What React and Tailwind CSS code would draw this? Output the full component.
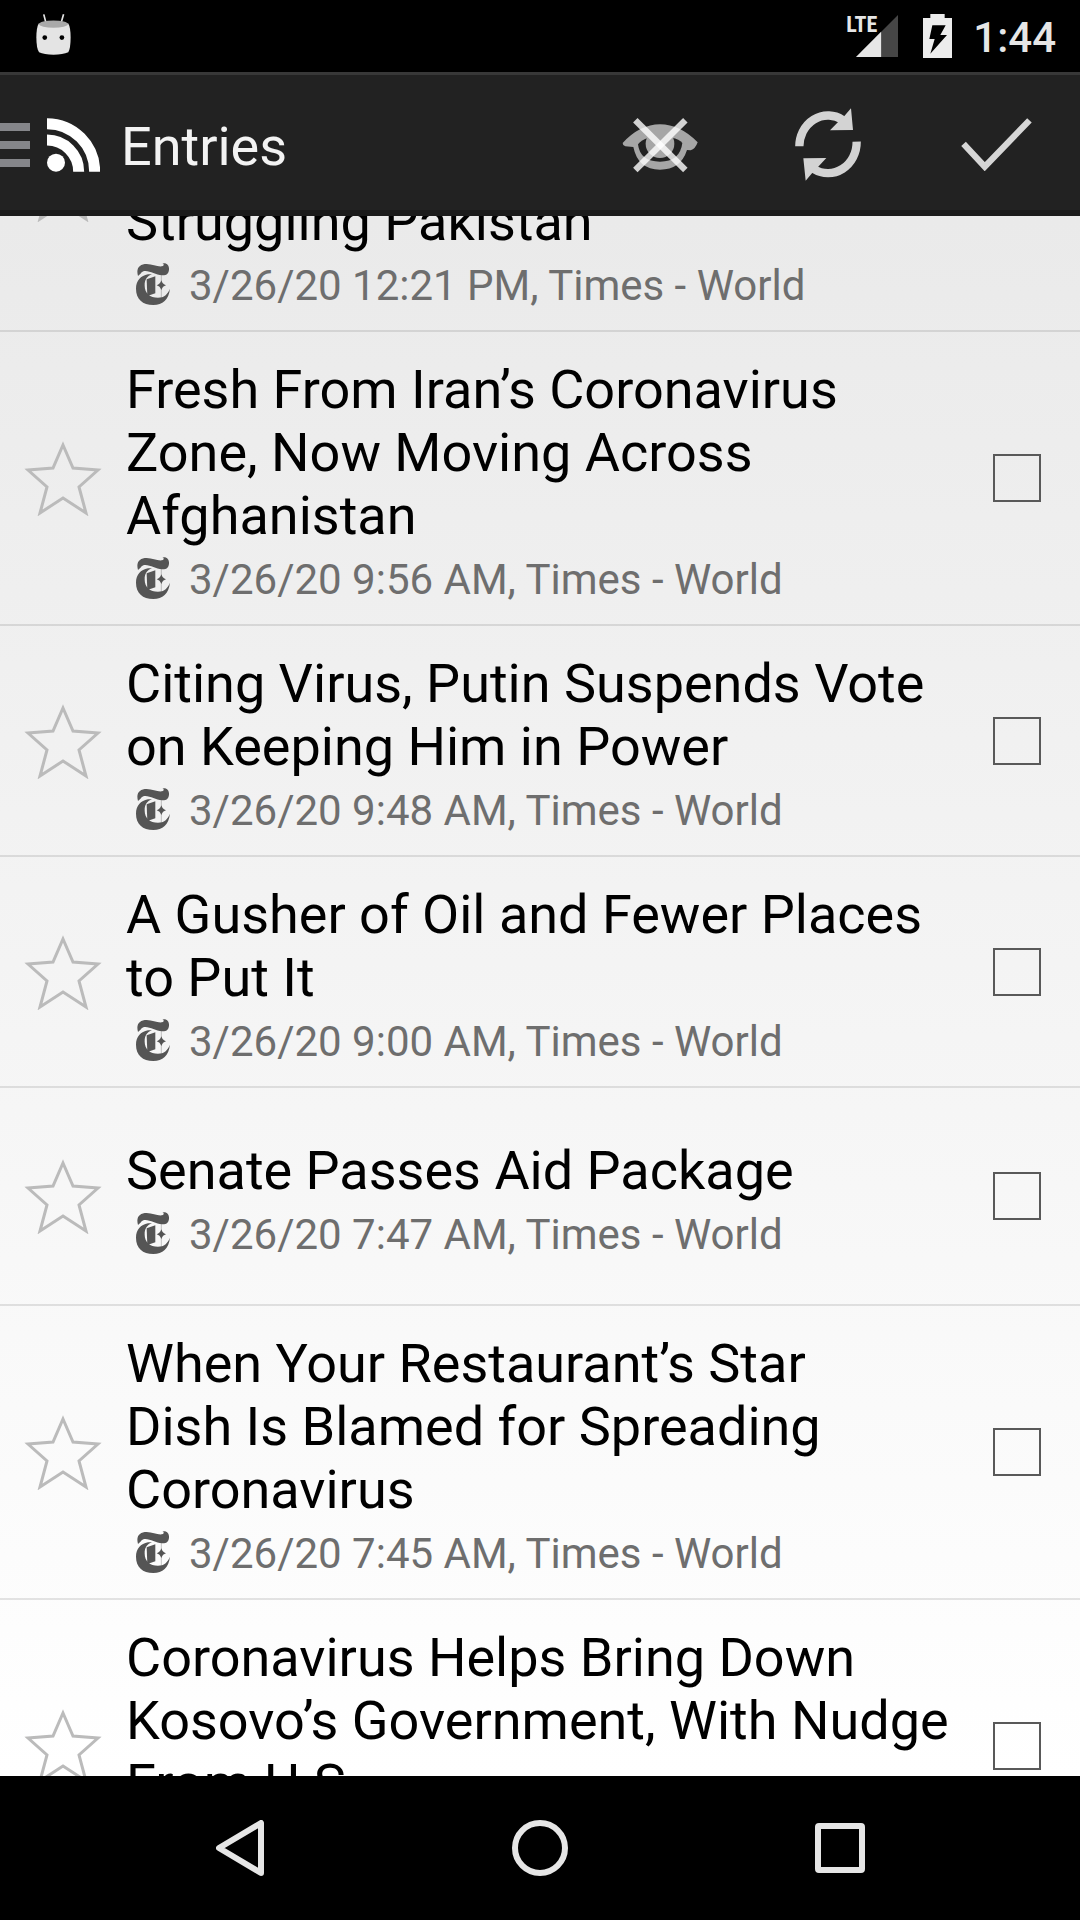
const entries = [
  {
    id: "pakistan",
    title: "Struggling Pakistan",
    date: "3/26/20 12:21 PM",
    rowClass: "min-h-[294px] items-stretch",
    textClass: "justify-end",
  },
  { id: "iran", title: "Fresh From Iran’s Coronavirus Zone, Now Moving Across Afghanistan", date: "3/26/20 9:56 AM" },
  { id: "putin", title: "Citing Virus, Putin Suspends Vote on Keeping Him in Power", date: "3/26/20 9:48 AM" },
  { id: "oil", title: "A Gusher of Oil and Fewer Places to Put It", date: "3/26/20 9:00 AM" },
  { id: "senate", title: "Senate Passes Aid Package", date: "3/26/20 7:47 AM" },
  { id: "restaurant", title: "When Your Restaurant’s Star\nDish Is Blamed for Spreading Coronavirus", date: "3/26/20 7:45 AM" },
  {
    id: "kosovo",
    title: "Coronavirus Helps Bring Down Kosovo’s Government, With Nudge From U.S.",
    rowClass: "min-h-[294px] items-stretch",
    textClass: "justify-start",
  },
];

function DroidIcon() {
  return (
    <svg viewBox="110 38 104 122" className="h-[41px] w-[35px]" aria-hidden="true">
      <path d="M133 39 L140 66 M192 39 L184 66" stroke="#e4e4e4" strokeWidth="5" />
      <path d="M118 66 Q111 78 111 108 Q111 140 119 152 Q134 159 162 159 Q190 159 206 152 Q213 140 213 108 Q213 78 206 66 Z" fill="#e4e4e4" />
      <ellipse cx="162" cy="68" rx="43" ry="11" fill="#a9a9a9" />
      <circle cx="136" cy="108" r="7" fill="#000" />
      <circle cx="187" cy="108" r="7" fill="#000" />
    </svg>
  );
}

function SignalIcon() {
  return (
    <svg viewBox="0 0 127 127" className="h-[42px] w-[42px]" aria-hidden="true">
      <path d="M0 127 L127 0 V127 Z" fill="#464646" />
      <path d="M0 127 L76 51 V127 Z" fill="#e6e6e6" />
    </svg>
  );
}

function BatteryIcon() {
  return (
    <svg viewBox="309 42 87 132" className="h-[44px] w-[29px]" aria-hidden="true">
      <path d="M331 42 H374 V54 H396 V174 H309 V54 H331 Z" fill="#ececec" />
      <path d="M337 76 H377 L361 105 H381 L331 161 L344 117 H328 Z" fill="#000" />
    </svg>
  );
}

function RssIcon() {
  return (
    <svg viewBox="141 352 159 162" className="h-[54px] w-[53px]" aria-hidden="true">
      <circle cx="168" cy="486" r="27" fill="#fff" />
      <path d="M141 369 A143 144 0 0 1 284 513 M141 418 A95 95 0 0 1 236 513" fill="none" stroke="#fff" strokeWidth="33" />
    </svg>
  );
}

function HideReadIcon() {
  return (
    <svg viewBox="66 108 228 168" className="h-[56px] w-[76px]" aria-hidden="true">
      <path d="M68 186 Q120 130 180 130 Q240 130 293 184 Q286 204 272 208 L261 207 Q242 266 180 266 Q114 266 100 198 L76 196 Q68 194 68 186 Z" fill="#a6a6a6" />
      <path d="M114 190 Q124 176 145 170 L215 170 Q238 174 247 186 Q240 242 180 242 Q120 242 114 190 Z" fill="#222" />
      <circle cx="180" cy="188" r="43" fill="#a6a6a6" />
      <path d="M106 118 L256 267" stroke="#fff" strokeOpacity="0.8" strokeWidth="19" />
      <path d="M256 118 L106 267" stroke="#fff" strokeOpacity="0.8" strokeWidth="19" />
    </svg>
  );
}

function RefreshIcon() {
  return (
    <svg viewBox="586 86 198 219" className="h-[73px] w-[66px]" aria-hidden="true">
      <g fill="none" stroke="#d3d3d3" strokeWidth="25">
        <path d="M599 201 A86 93 0 0 1 728 121" />
        <path d="M771 187 A86 93 0 0 1 642 269" />
      </g>
      <path d="M754 87 L760 152 L691 153 L716 127 L734 110 Z" fill="#d3d3d3" />
      <path d="M618 304 L611 237 L680 236 L655 263 L637 282 Z" fill="#d3d3d3" />
    </svg>
  );
}

function CheckIcon() {
  return (
    <svg viewBox="1082 112 213 160" className="h-[53px] w-[71px]" aria-hidden="true">
      <path d="M1089 190 L1153 259 L1288 119" fill="none" stroke="#d6d6d6" strokeWidth="19" />
    </svg>
  );
}

function StarIcon() {
  return (
    <svg viewBox="0 0 80 76" className="h-[76px] w-[80px]" aria-hidden="true">
      <path d="M40 5 L50 28 L75 30 L56 47 L63 73 L40 58 L17 73 L24 47 L5 30 L30 28 Z" fill="none" stroke="#bbb" strokeWidth="3" />
    </svg>
  );
}

function TimesLogo() {
  return (
    <svg viewBox="0 0 102 126" className="mb-1 h-[42px] w-[34px]" fill="#555" aria-hidden="true">
      <path d="M6 39 C-1 14 12 3 32 3 C50 3 64 12 78 10 C84 8 85 3 79 1 C94 -2 100 9 99 20 C98 32 90 38 78 37 C60 36 44 24 28 24 C16 24 16 32 6 39 Z" />
      <path d="M36 34 C14 38 0 54 0 77 C0 108 20 126 52 126 C80 126 98 110 102 77 C95 94 84 104 66 104 C42 104 26 90 26 68 C26 50 32 40 48 34 Z" />
      <path d="M32 49 L58 40 V91 L34 99 Z" />
      <path d="M76 52 C79 61 83 65 90 67 C83 69 79 73 76 81 C73 73 69 69 62 67 C69 65 73 61 76 52 Z" />
      <path d="M76 34 V106" stroke="#555" strokeOpacity="0.5" strokeWidth="2" />
    </svg>
  );
}

function StatusBar() {
  return (
    <div className="flex h-[72px] shrink-0 items-center bg-black pl-9 pr-6">
      <div className="pb-1">
        <DroidIcon />
      </div>
      <div className="ml-auto flex items-center">
        <div className="relative pl-[10px]">
          <SignalIcon />
          <span className="absolute left-0 top-0 font-['Roboto_Condensed','Liberation_Sans_Narrow'] text-[22px] font-bold leading-[20px] text-[#e6e6e6]">LTE</span>
        </div>
        <div className="ml-[25px]">
          <BatteryIcon />
        </div>
        <time className="ml-[21px] pt-[3px] text-[42px] font-medium leading-[48px] text-[#e6e6e6]">1:44</time>
      </div>
    </div>
  );
}

function ActionBar() {
  const action = "flex w-[168px] items-center justify-center";
  return (
    <header className="flex h-[144px] shrink-0 border-b-[6px] border-t-[3px] border-b-[#1b1b1b] border-t-[#383838] bg-[#222] pt-1">
      <button type="button" aria-label="Open navigation" className="flex items-center">
        <span className="flex w-[30px] flex-col gap-[10px]">
          <span className="h-2 bg-[#85868a]" />
          <span className="h-2 bg-[#85868a]" />
          <span className="h-2 bg-[#85868a]" />
        </span>
        <span className="ml-[17px]">
          <RssIcon />
        </span>
      </button>
      <h1 className="ml-[21px] self-center pt-1 text-[54px] leading-[64px] text-[#f3f3f3]">Entries</h1>
      <div className="ml-auto flex">
        <button type="button" aria-label="Hide read entries" className={action}>
          <HideReadIcon />
        </button>
        <button type="button" aria-label="Refresh" className={action}>
          <RefreshIcon />
        </button>
        <button type="button" aria-label="Mark all as read" className={action}>
          <CheckIcon />
        </button>
      </div>
    </header>
  );
}

function EntryRow({ entry }) {
  const titleId = "title-" + entry.id;
  return (
    <li className={"flex border-b-2 border-black/10 " + (entry.rowClass || "min-h-[218px] items-center")}>
      <button type="button" aria-label="Add to favorites" className="flex w-[126px] shrink-0 items-center justify-center self-stretch">
        <StarIcon />
      </button>
      <div className={"flex min-w-0 flex-1 flex-col gap-2 pb-5 pt-[26px] " + (entry.textClass || "")}>
        <h2 id={titleId} className="whitespace-pre-line text-[54px] leading-[63px] text-black">{entry.title}</h2>
        {entry.date && (
          <p className="flex items-center gap-[19px] pl-[10px] text-[42px] leading-[49px] text-[#6e6e6e]">
            <TimesLogo />
            <span>{entry.date}, Times - World</span>
          </p>
        )}
      </div>
      <div className="flex w-[126px] shrink-0 items-center justify-center self-stretch">
        <input type="checkbox" aria-labelledby={titleId} className="size-12 appearance-none border-2 border-[#595959] checked:bg-[#595959]" />
      </div>
    </li>
  );
}

function NavigationBar() {
  const button = "flex flex-1 items-center justify-center";
  return (
    <nav className="flex h-[144px] shrink-0 justify-center bg-black px-[90px]">
      <button type="button" aria-label="Back" className={button}>
        <svg viewBox="0 0 48 56" className="h-[56px] w-[48px]" aria-hidden="true">
          <path d="M45 3 V53 L3 28 Z" fill="none" stroke="#e6e6e6" strokeWidth="6" strokeLinejoin="round" />
        </svg>
      </button>
      <button type="button" aria-label="Home" className={button}>
        <span className="size-14 rounded-full border-[6px] border-[#e6e6e6]" />
      </button>
      <button type="button" aria-label="Recent apps" className={button}>
        <span className="size-[50px] rounded-[4px] border-[6px] border-[#e6e6e6]" />
      </button>
    </nav>
  );
}

export default function App() {
  return (
    <div className="flex h-screen flex-col overflow-hidden font-[Roboto,sans-serif]">
      <StatusBar />
      <ActionBar />
      <main className="min-h-0 flex-1 overflow-hidden bg-linear-to-b from-[#eaeaea] to-white">
        <ul className="-mt-[178px]">
          {entries.map((entry) => (
            <EntryRow key={entry.id} entry={entry} />
          ))}
        </ul>
      </main>
      <NavigationBar />
    </div>
  );
}
